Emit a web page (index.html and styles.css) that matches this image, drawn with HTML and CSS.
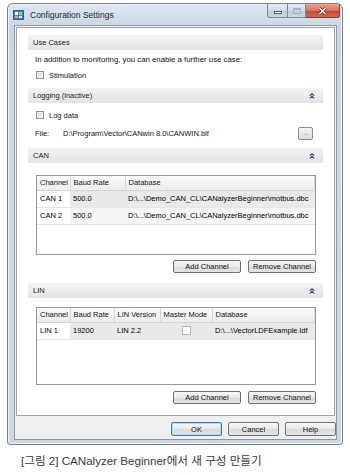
FILE: index.html
```html
<!DOCTYPE html>
<html lang="ko">
  <head>
    <meta charset="UTF-8" />
    <meta name="viewport" content="width=device-width, initial-scale=1.0" />
    <title>Configuration Settings</title>
    <link rel="stylesheet" href="styles.css">
  </head>
  <body>
    <div class="window">
      <div class="titlebar">
        <svg class="app-icon" width="11" height="10" viewBox="0 0 11 10">
          <rect x="0.5" y="0.5" width="10" height="9" fill="#3f7fc7" stroke="#2a5c99" />
          <rect x="2" y="2" width="3" height="3" fill="#ffffff" />
          <rect x="6" y="2" width="3" height="3" fill="#9fd07a" />
          <rect x="2" y="6" width="3" height="2" fill="#f0a040" />
          <rect x="6" y="6" width="3" height="2" fill="#d9e8f7" />
        </svg>
        <span class="title">Configuration Settings</span>
        <div class="win-buttons">
          <span class="wb wb-min"><span class="glyph-min"></span></span>
          <span class="wb wb-max"><span class="glyph-max"></span></span>
          <span class="wb wb-close">
            <svg width="9" height="8" viewBox="0 0 9 8">
              <path d="M1.5 1 L7.5 7 M7.5 1 L1.5 7" stroke="#5a2a22" stroke-width="2.6" />
              <path d="M1.5 1 L7.5 7 M7.5 1 L1.5 7" stroke="#ffffff" stroke-width="1.4" />
            </svg>
          </span>
        </div>
      </div>

      <div class="client">
        <div class="panel">
          <div class="section">
            <div class="section-head">Use Cases</div>
            <div class="section-body use-cases">
              <div class="line">In addition to monitoring, you can enable a further use case:</div>
              <div class="check-row"><span class="checkbox"></span>Stimulation</div>
            </div>
          </div>

          <div class="section">
            <div class="section-head">
              Logging (inactive)
              <svg class="collapse" width="6" height="6" viewBox="0 0 6 6">
                <path d="M0.8 2.8 L3 0.8 L5.2 2.8 M0.8 5.4 L3 3.4 L5.2 5.4" fill="none" stroke="#34558c" stroke-width="1.2" />
              </svg>
            </div>
            <div class="section-body logging">
              <div class="check-row"><span class="checkbox"></span>Log data</div>
              <div class="file-row">
                <span class="file-label">File:</span>
                <span>D:\Program\Vector\CANwin 8.0\CANWIN.blf</span>
                <span class="browse">...</span>
              </div>
            </div>
          </div>

          <div class="section">
            <div class="section-head">
              CAN
              <svg class="collapse" width="6" height="6" viewBox="0 0 6 6">
                <path d="M0.8 2.8 L3 0.8 L5.2 2.8 M0.8 5.4 L3 3.4 L5.2 5.4" fill="none" stroke="#34558c" stroke-width="1.2" />
              </svg>
            </div>
            <div class="section-body can">
              <div class="grid can-grid">
                <table>
                  <colgroup>
                    <col style="width: 33px" />
                    <col style="width: 55px" />
                    <col />
                  </colgroup>
                  <tr>
                    <th>Channel</th>
                    <th>Baud Rate</th>
                    <th>Database</th>
                  </tr>
                  <tr class="row-sel">
                    <td>CAN 1</td>
                    <td>500.0</td>
                    <td>D:\...\Demo_CAN_CL\CANalyzerBeginner\motbus.dbc</td>
                  </tr>
                  <tr>
                    <td>CAN 2</td>
                    <td>500.0</td>
                    <td>D:\...\Demo_CAN_CL\CANalyzerBeginner\motbus.dbc</td>
                  </tr>
                </table>
              </div>
              <div class="btn-row">
                <span class="btn">Add Channel</span>
                <span class="btn">Remove Channel</span>
              </div>
            </div>
          </div>

          <div class="section">
            <div class="section-head">
              LIN
              <svg class="collapse" width="6" height="6" viewBox="0 0 6 6">
                <path d="M0.8 2.8 L3 0.8 L5.2 2.8 M0.8 5.4 L3 3.4 L5.2 5.4" fill="none" stroke="#34558c" stroke-width="1.2" />
              </svg>
            </div>
            <div class="section-body lin">
              <div class="grid lin-grid">
                <table>
                  <colgroup>
                    <col style="width: 33px" />
                    <col style="width: 44px" />
                    <col style="width: 46px" />
                    <col style="width: 52px" />
                    <col />
                  </colgroup>
                  <tr>
                    <th>Channel</th>
                    <th>Baud Rate</th>
                    <th>LIN Version</th>
                    <th>Master Mode</th>
                    <th>Database</th>
                  </tr>
                  <tr class="row-sel">
                    <td>LIN 1</td>
                    <td>19200</td>
                    <td>LIN 2.2</td>
                    <td class="center"><span class="checkbox flat"></span></td>
                    <td>D:\...\VectorLDFExample.ldf</td>
                  </tr>
                </table>
              </div>
              <div class="btn-row">
                <span class="btn">Add Channel</span>
                <span class="btn">Remove Channel</span>
              </div>
            </div>
          </div>
        </div>

        <div class="footer">
          <span class="btn dlg-btn default">OK</span>
          <span class="btn dlg-btn">Cancel</span>
          <span class="btn dlg-btn">Help</span>
        </div>
      </div>
    </div>

    <p class="caption">[그림 2] CANalyzer Beginner에서 새 구성 만들기</p>
  </body>
</html>
```

FILE: styles.css
```css
* {
  box-sizing: border-box;
}

body {
  margin: 0;
  background-color: #fff;
  font-family: "Liberation Sans", Arial, sans-serif;
  font-size: 7.5px;
  color: #111;
}

/* window frame */
.window {
  width: 336px;
  height: 442px;
  margin: 3px 0 0 7px;
  padding: 0 5px 4px 6px;
  border: 1px solid #77828f;
  border-radius: 6px 6px 3px 3px;
  background: linear-gradient(#dfe7f1, #cbd7e5 22px, #cfd9e6);
  box-shadow: inset 0 0 0 1px #edf2f8;
  display: flex;
  flex-direction: column;
}

.titlebar {
  height: 21px;
  display: flex;
  align-items: center;
  flex: none;
}

.app-icon {
  margin: 1px 0 0 -1px;
}

.title {
  margin-left: 6px;
  font-size: 8.5px;
  color: #1c2733;
}

.win-buttons {
  margin-left: auto;
  margin-right: -3px;
  align-self: flex-start;
  display: flex;
}

.wb {
  height: 14px;
  display: flex;
  align-items: center;
  justify-content: center;
  border: 1px solid #7d8896;
  border-top: none;
  background: linear-gradient(#e6ecf3, #d3dce7 50%, #bfcad8 51%, #cdd7e3);
}

.wb-min {
  width: 21px;
  border-radius: 0 0 0 3px;
}

.wb-max {
  width: 18px;
  border-left: none;
}

.wb-close {
  width: 34px;
  border-left: none;
  border-color: #8a3a30;
  border-radius: 0 0 3px 0;
  background: linear-gradient(#e9a596, #d9725f 50%, #c6432f 51%, #d56a55);
}

.glyph-min {
  width: 8px;
  height: 3px;
  margin-top: 3px;
  background-color: #fff;
  border: 1px solid #4f5c6b;
}

.glyph-max {
  width: 8px;
  height: 6px;
  border: 1px solid #a5b1bf;
  border-top-width: 2px;
}

/* client area */
.client {
  flex: 1;
  display: flex;
  flex-direction: column;
  background-color: #f0f0f0;
  border: 1px solid #8d98a4;
}

.panel {
  height: 389px;
  margin: 1px 1px 0;
  padding: 7px 11px 0;
  border: 1px solid #a3a3a3;
  background-color: #fff;
  flex: none;
}

.section-head {
  height: 15px;
  padding: 0 8px 0 5px;
  display: flex;
  align-items: center;
  justify-content: space-between;
  background: linear-gradient(#f3f3f3, #e4e4e4);
  color: #1a1a1a;
}

.section-body {
  padding-left: 7px;
  padding-right: 7px;
}

.use-cases {
  padding-top: 5px;
  padding-bottom: 6px;
}

.logging {
  padding-top: 5px;
  padding-bottom: 8px;
}

.can {
  padding: 12px 7px 10px 8px;
}

.lin {
  padding: 9px 7px 0 8px;
}

.line {
  height: 10px;
  line-height: 10px;
  font-size: 7.8px;
}

.check-row {
  height: 14px;
  display: flex;
  align-items: center;
  gap: 5px;
}

.use-cases .check-row {
  margin-top: 3px;
}

.checkbox {
  width: 8px;
  height: 8px;
  margin-left: 1px;
  border: 1px solid #8e8f8f;
  background: linear-gradient(135deg, #dcdcdc, #f7f7f7);
  box-shadow: inset 0 0 0 1px #f4f4f4;
}

.checkbox.flat {
  display: inline-block;
  width: 9px;
  height: 9px;
  margin: 0;
  border-color: #b5b5b5;
  background: #fff;
  box-shadow: none;
  vertical-align: middle;
}

.file-row {
  height: 14px;
  margin-top: 4px;
  display: flex;
  align-items: center;
}

.file-label {
  width: 28px;
}

.browse {
  width: 15px;
  height: 13px;
  margin-left: auto;
  margin-right: 3px;
  border: 1px solid #8a8a8a;
  border-radius: 2px;
  background: linear-gradient(#f4f4f4, #dcdcdc);
  color: #555;
  font-size: 6px;
  text-align: center;
  line-height: 10px;
}

/* channel tables */
.grid {
  border: 1px solid #999;
  background-color: #fff;
}

.can-grid {
  height: 80px;
}

.lin-grid {
  height: 78px;
}

.grid table {
  width: 100%;
  border-collapse: collapse;
  table-layout: fixed;
}

.grid th {
  height: 14px;
  padding: 0 0 0 3px;
  text-align: left;
  font-weight: normal;
  background: linear-gradient(#fbfbfb, #ececec);
  border-right: 1px solid #d6d6d6;
  border-bottom: 1px solid #d4d4d4;
  white-space: nowrap;
  overflow: hidden;
}

.grid td {
  height: 17px;
  padding: 0 0 0 3px;
  white-space: nowrap;
  overflow: hidden;
  background-color: #f5f5f5;
  border-bottom: 1px solid #e6e6e6;
  color: #000;
}

.grid tr.row-sel td {
  background-color: #e9e9e9;
}

.grid td:first-child,
.grid tr.row-sel td:first-child {
  background-color: #fff;
}

.grid td.center {
  padding: 0;
  text-align: center;
}

.btn-row {
  margin-top: 5px;
  display: flex;
  justify-content: flex-end;
  gap: 7px;
}

.lin .btn-row {
  margin-top: 6px;
}

.btn {
  width: 68px;
  height: 13px;
  display: flex;
  align-items: center;
  justify-content: center;
  border: 1px solid #707070;
  border-radius: 2px;
  background: linear-gradient(#f6f6f6, #e9e9e9 50%, #dadada 51%, #e4e4e4);
  color: #111;
}

/* dialog buttons */
.footer {
  flex: 1;
  padding-top: 6px;
  display: flex;
  justify-content: flex-end;
  align-items: flex-start;
  gap: 6px;
}

.dlg-btn {
  width: 51px;
  height: 14px;
}

.dlg-btn.default {
  border-color: #3c7fb1;
  box-shadow: inset 0 0 0 1px #a9dcf6;
}

.caption {
  margin: 9px 0 0 21px;
  font-family: "Liberation Sans", "Noto Sans CJK KR", sans-serif;
  font-size: 11.6px;
  line-height: 14px;
  color: #3a3a3a;
}
```
